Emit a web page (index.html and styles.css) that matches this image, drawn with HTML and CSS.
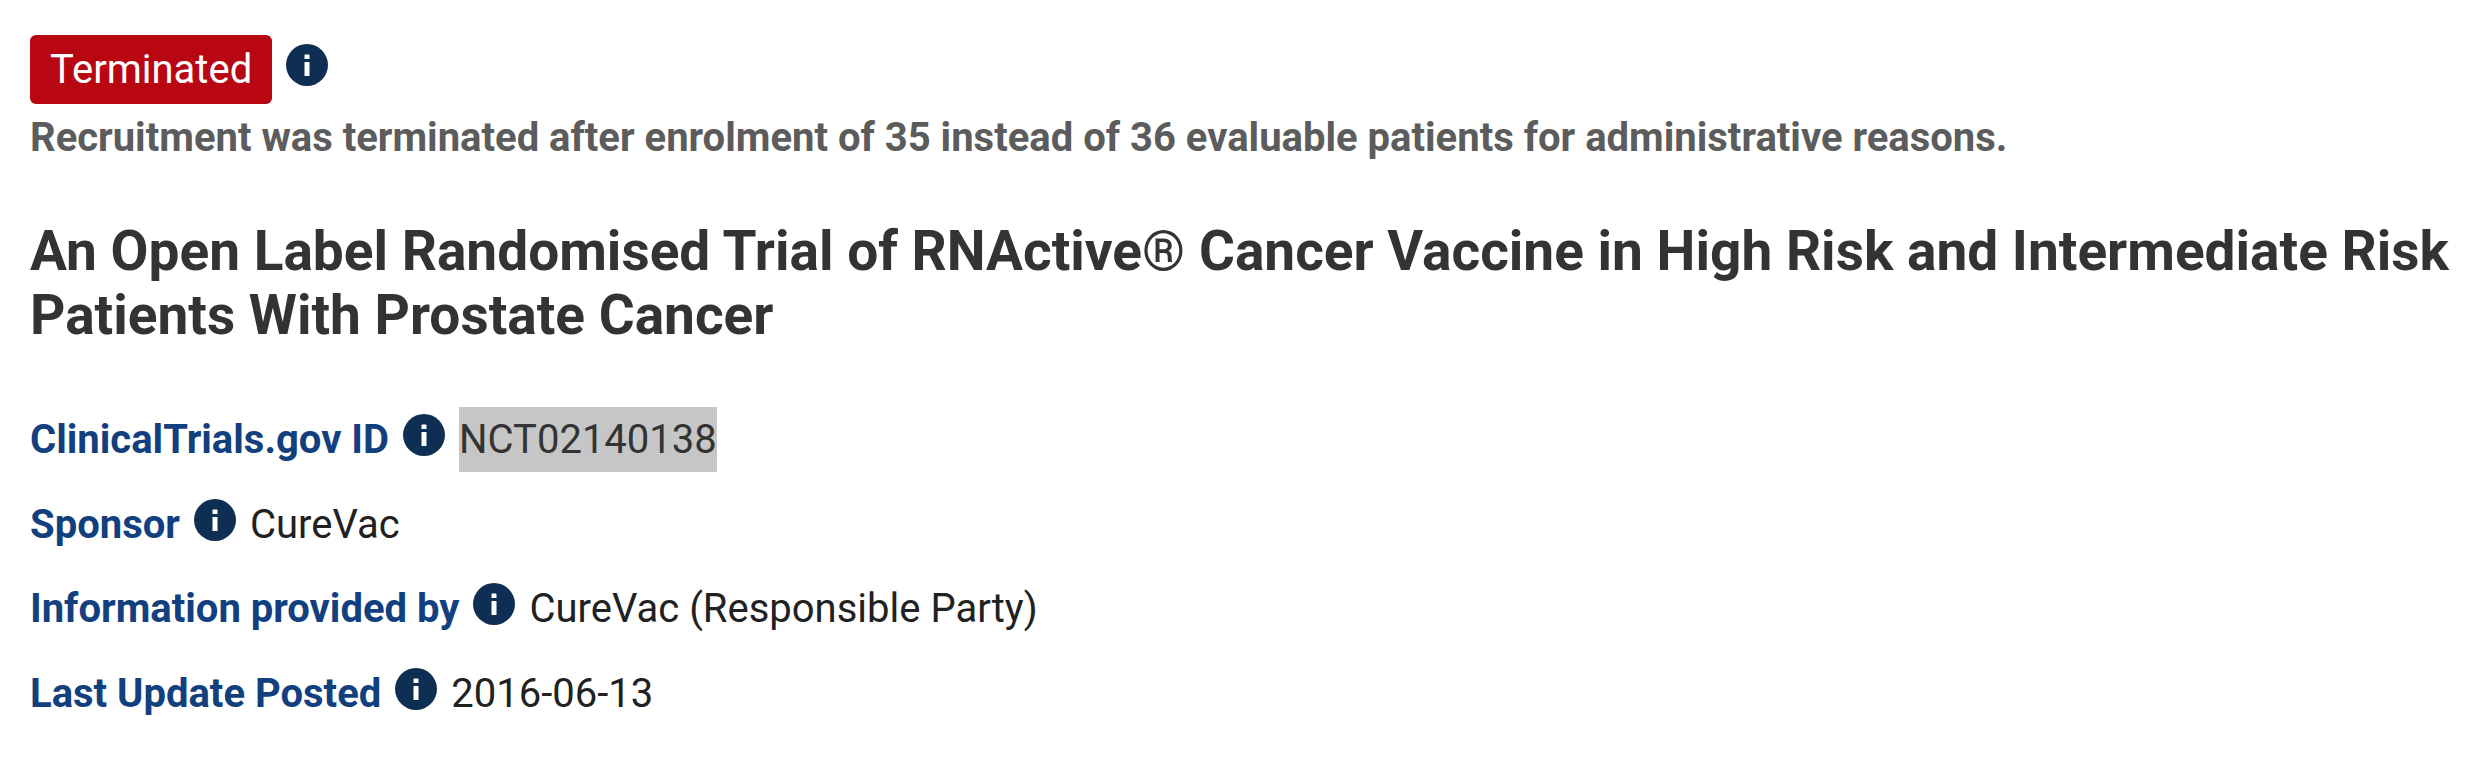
FILE: index.html
```html
<html>
<head>
	<link rel="stylesheet" href="styles.css">
</head>

<body>
	<div class="status-row">
		<span class="status-badge">Terminated</span>
		<svg class="info-icon" viewBox="0 0 42 42"><circle cx="21" cy="21" r="21"/><rect class="info-dot" x="18.5" y="10.5" width="5" height="4.6" rx="0.6"/><rect class="info-dot" x="18.5" y="18" width="5" height="14" rx="0.6"/></svg>
	</div>
	<p class="status-reason">Recruitment was terminated after enrolment of 35 instead of 36 evaluable patients for administrative reasons.</p>
	<h1 class="trial-title">An Open Label Randomised Trial of RNActive® Cancer Vaccine in High Risk and Intermediate Risk Patients With Prostate Cancer</h1>
	<div class="meta-row">
		<span class="meta-label">ClinicalTrials.gov ID</span>
		<svg class="info-icon" viewBox="0 0 42 42"><circle cx="21" cy="21" r="21"/><rect class="info-dot" x="18.5" y="10.5" width="5" height="4.6" rx="0.6"/><rect class="info-dot" x="18.5" y="18" width="5" height="14" rx="0.6"/></svg>
		<span class="meta-value selected">NCT02140138</span>
	</div>
	<div class="meta-row">
		<span class="meta-label">Sponsor</span>
		<svg class="info-icon" viewBox="0 0 42 42"><circle cx="21" cy="21" r="21"/><rect class="info-dot" x="18.5" y="10.5" width="5" height="4.6" rx="0.6"/><rect class="info-dot" x="18.5" y="18" width="5" height="14" rx="0.6"/></svg>
		<span class="meta-value">CureVac</span>
	</div>
	<div class="meta-row">
		<span class="meta-label">Information provided by</span>
		<svg class="info-icon" viewBox="0 0 42 42"><circle cx="21" cy="21" r="21"/><rect class="info-dot" x="18.5" y="10.5" width="5" height="4.6" rx="0.6"/><rect class="info-dot" x="18.5" y="18" width="5" height="14" rx="0.6"/></svg>
		<span class="meta-value">CureVac (Responsible Party)</span>
	</div>
	<div class="meta-row">
		<span class="meta-label">Last Update Posted</span>
		<svg class="info-icon" viewBox="0 0 42 42"><circle cx="21" cy="21" r="21"/><rect class="info-dot" x="18.5" y="10.5" width="5" height="4.6" rx="0.6"/><rect class="info-dot" x="18.5" y="18" width="5" height="14" rx="0.6"/></svg>
		<span class="meta-value">2016-06-13</span>
	</div>
</body>

</html>
```

FILE: styles.css
```css
body{
	margin: 0;
	padding: 35px 0 0 30px;
	background-color: white;
	font-family: Roboto, sans-serif;
	overflow: hidden;
}

.status-row{
	display: flex;
	align-items: flex-start;
	gap: 14px;
}

.status-badge{
	display: block;
	height: 69px;
	line-height: 69px;
	padding: 0 20px;
	background-color: #b80613;
	border-radius: 6px;
	color: white;
	font-size: 40px;
}

.status-row .info-icon{
	margin-top: 9px;
}

.info-icon{
	width: 42px;
	height: 42px;
	flex: none;
	fill: #0f2e53;
}

.info-dot{
	fill: white;
}

.status-reason{
	margin: 0;
	padding-top: 9px;
	color: #5c5c5c;
	font-size: 40px;
	font-weight: 700;
	line-height: 50px;
}

.trial-title{
	margin: 56px 0 60px;
	color: #333333;
	font-size: 55px;
	font-weight: 700;
	line-height: 64px;
}

.meta-row{
	display: flex;
	align-items: center;
	margin-bottom: 19.6px;
	font-size: 40px;
	line-height: 65px;
}

.meta-row .info-icon{
	margin: 0 14px 9px 14px;
}

.meta-label{
	color: #12407f;
	font-weight: 700;
}

.meta-value{
	color: #212121;
}

.selected{
	background-color: #c6c6c6;
	color: #333333;
}
```
